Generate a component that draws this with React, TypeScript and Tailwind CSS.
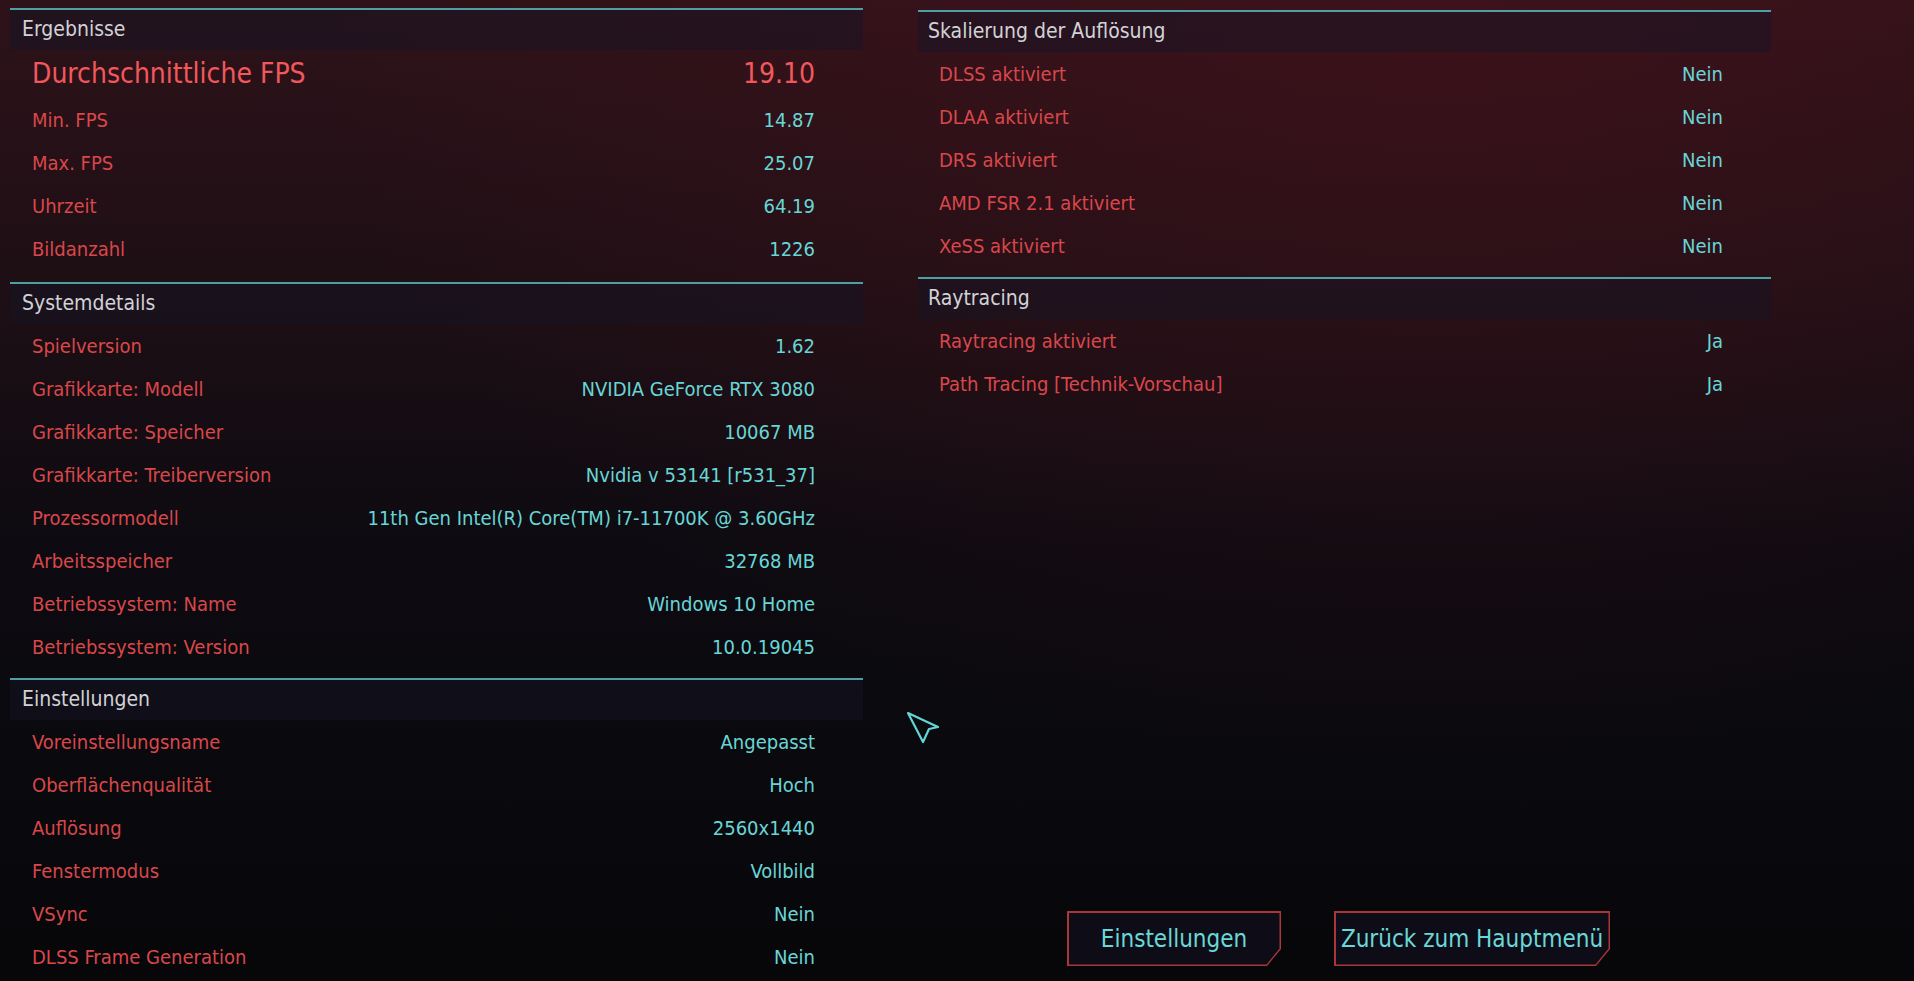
const ergebnisse = [
  ["Min. FPS", "14.87"],
  ["Max. FPS", "25.07"],
  ["Uhrzeit", "64.19"],
  ["Bildanzahl", "1226"],
];

const system = [
  ["Spielversion", "1.62"],
  ["Grafikkarte: Modell", "NVIDIA GeForce RTX 3080"],
  ["Grafikkarte: Speicher", "10067 MB"],
  ["Grafikkarte: Treiberversion", "Nvidia v 53141 [r531_37]"],
  ["Prozessormodell", "11th Gen Intel(R) Core(TM) i7-11700K @ 3.60GHz"],
  ["Arbeitsspeicher", "32768 MB"],
  ["Betriebssystem: Name", "Windows 10 Home"],
  ["Betriebssystem: Version", "10.0.19045"],
];

const einstellungen = [
  ["Voreinstellungsname", "Angepasst"],
  ["Oberflächenqualität", "Hoch"],
  ["Auflösung", "2560x1440"],
  ["Fenstermodus", "Vollbild"],
  ["VSync", "Nein"],
  ["DLSS Frame Generation", "Nein"],
];

const skalierung = [
  ["DLSS aktiviert", "Nein"],
  ["DLAA aktiviert", "Nein"],
  ["DRS aktiviert", "Nein"],
  ["AMD FSR 2.1 aktiviert", "Nein"],
  ["XeSS aktiviert", "Nein"],
];

const raytracing = [
  ["Raytracing aktiviert", "Ja"],
  ["Path Tracing [Technik-Vorschau]", "Ja"],
];

function SectionHeader({ title, pad }: { title: string; pad: string }) {
  return (
    <>
      <div className="h-[2px] bg-[#4f9ea2]" />
      <div className={`h-[40px] flex items-center bg-[rgba(22,20,36,0.5)] ${pad} text-[21px] text-[#d2d2d6]`}>
        {title}
      </div>
    </>
  );
}

function Row({ label, value, pl, pr }: { label: string; value: string; pl: string; pr: string }) {
  return (
    <div className={`h-[43px] flex items-center justify-between ${pl} ${pr} text-[20px]`}>
      <span className="text-[#d9474a]">{label}</span>
      <span className="text-[#68d6d6]">{value}</span>
    </div>
  );
}

function Button({ children, width }: { children: string; width: string }) {
  return (
    <div className={`${width} h-[55px] bg-[#a8363b] p-[1.5px] [clip-path:polygon(0_0,100%_0,100%_calc(100%-17px),calc(100%-14px)_100%,0_100%)]`}>
      <div className="w-full h-full bg-[#0e0d17] flex items-center justify-center whitespace-nowrap text-[24px] text-[#6ad8d8] [clip-path:polygon(0_0,100%_0,100%_calc(100%-16px),calc(100%-13px)_100%,0_100%)]">
        {children}
      </div>
    </div>
  );
}

export default function App() {
  return (
    <div className="relative w-[1914px] h-[981px] overflow-hidden font-['Liberation_Sans_Narrow','DejaVu_Sans_Condensed',sans-serif] bg-[radial-gradient(ellipse_at_75%_0%,rgba(80,18,28,0.45),transparent_55%),linear-gradient(180deg,#2e1219_0%,#1d0f15_30%,#0d0b11_55%,#07070a_100%)]">
      <div className="flex h-full">
        {/* Left column */}
        <div className="ml-[10px] w-[853px] pt-[8px] flex flex-col">
          <SectionHeader title="Ergebnisse" pad="pl-[12px]" />
          <div className="h-[48px] flex items-center justify-between pl-[22px] pr-[48px] text-[28px]">
            <span className="text-[#f2585b]">Durchschnittliche FPS</span>
            <span className="text-[#f2585b]">19.10</span>
          </div>
          {ergebnisse.map(([l, v]) => (
            <Row key={l} label={l} value={v} pl="pl-[22px]" pr="pr-[48px]" />
          ))}
          <div className="h-[12px]" />

          <SectionHeader title="Systemdetails" pad="pl-[12px]" />
          {system.map(([l, v]) => (
            <Row key={l} label={l} value={v} pl="pl-[22px]" pr="pr-[48px]" />
          ))}
          <div className="h-[10px]" />

          <SectionHeader title="Einstellungen" pad="pl-[12px]" />
          {einstellungen.map(([l, v]) => (
            <Row key={l} label={l} value={v} pl="pl-[22px]" pr="pr-[48px]" />
          ))}
        </div>

        {/* Right column */}
        <div className="ml-[55px] w-[853px] pt-[10px] flex flex-col">
          <SectionHeader title="Skalierung der Auflösung" pad="pl-[10px]" />
          {skalierung.map(([l, v]) => (
            <Row key={l} label={l} value={v} pl="pl-[21px]" pr="pr-[48px]" />
          ))}
          <div className="h-[10px]" />

          <SectionHeader title="Raytracing" pad="pl-[10px]" />
          {raytracing.map(([l, v]) => (
            <Row key={l} label={l} value={v} pl="pl-[21px]" pr="pr-[48px]" />
          ))}

          <div className="flex-1" />
          <div className="flex gap-[53px] pl-[149px] pb-[15px]">
            <Button width="w-[214px]">Einstellungen</Button>
            <Button width="w-[276px]">Zurück zum Hauptmenü</Button>
          </div>
        </div>
      </div>

      {/* mouse cursor */}
      <svg className="absolute left-[906px] top-[711px]" width="36" height="36" viewBox="0 0 36 36" fill="none">
        <path d="M2 2 L32 16 L23 18 L17 31 Z" stroke="#5fd6d8" strokeWidth="2.2" strokeLinejoin="round" />
      </svg>
    </div>
  );
}
